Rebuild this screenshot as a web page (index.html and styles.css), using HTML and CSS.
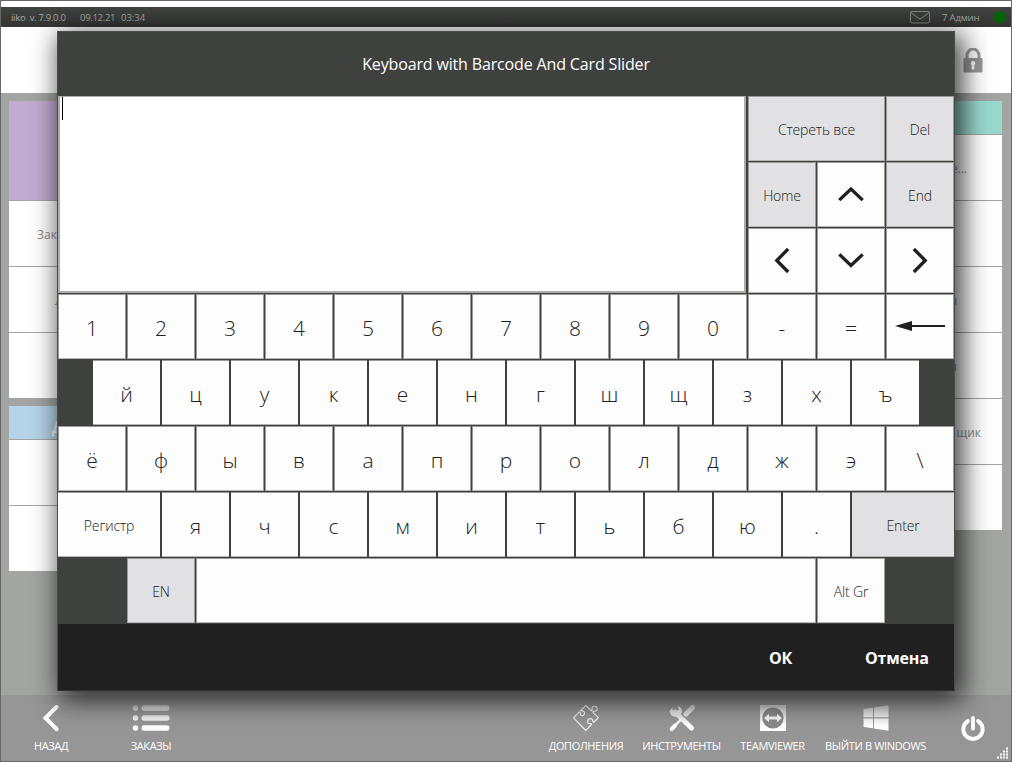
FILE: index.html
```html
<!DOCTYPE html>
<html lang="ru">
<head>
<meta charset="utf-8">
<title>iiko</title>
<link rel="stylesheet" href="styles.css">
</head>
<body>
<div class="window">
  <header class="status">
    <span class="app">iiko&nbsp; v. 7.9.0.0</span><span class="date">09.12.21</span><span>03:34</span>
    <svg class="mail" width="20" height="13" viewBox="0 0 20 13"><rect x=".5" y=".5" width="19" height="11.5" rx="1.5"/><path d="M1 1.5l7.2 5.6q1.8 1.3 3.6 0L19 1.5"/></svg>
    <span class="user">7 Админ</span><i class="online"></i>
  </header>
  <div class="head">
    <svg width="20" height="25" viewBox="0 0 20 25"><path d="M4 11V7.5a6 6.500 0 0 1 12 0V11" fill="none" stroke="#979897" stroke-width="3"/><rect x=".5" y="10" width="19" height="14.500" rx="1" fill="#979897"/><path d="M10 13a2.200 2.200 0 0 1 1.300 4v4.500H8.700V17A2.200 2.200 0 0 1 10 13z" fill="#fff"/></svg>
  </div>
  <main class="board">
    <div class="column left">
      <section class="group"><div class="cap purple"></div><div class="item zak">Зак</div><div class="item cut">Л</div><div class="item"></div></section>
      <section class="group"><div class="cap blue">Д</div><div class="item"></div><div class="item"></div></section>
    </div>
    <div class="column right">
      <section class="group"><div class="cap teal"></div><div class="item dots">е...</div><div class="item"></div><div class="item edge">н</div><div class="item edge">я</div><div class="item worker">щик</div><div class="item"></div></section>
    </div>
  </main>
  <footer class="toolbar">
    <div class="tool back"><svg width="40" height="28" viewBox="0 0 40 28"><path d="M25.500 3L14.500 14L25.500 25" fill="none" stroke="#fff" stroke-width="4" stroke-linecap="round"/></svg><span>НАЗАД</span></div>
    <div class="tool orders"><svg width="40" height="28" viewBox="0 0 40 28"><defs><linearGradient id="fade" gradientUnits="userSpaceOnUse" x1="0" y1="0" x2="0" y2="28"><stop offset="0" stop-color="#c8c8c8"/><stop offset=".75" stop-color="#fff"/></linearGradient></defs><g fill="url(#fade)"><circle cx="4.500" cy="4" r="2.700"/><circle cx="4.500" cy="14" r="2.700"/><circle cx="4.500" cy="24" r="2.700"/><rect x="10.500" y="1.300" width="28" height="5.400" rx="2.700"/><rect x="10.500" y="11.300" width="28" height="5.400" rx="2.700"/><rect x="10.500" y="21.300" width="28" height="5.400" rx="2.700"/></g></svg><span>ЗАКАЗЫ</span></div>
    <div class="tool addons"><svg width="40" height="28" viewBox="0 0 40 28"><path d="M7.500 13.800L13 8.200Q14.500 7.500 14.300 9.500Q14.500 12 17 11.500Q19.500 10 18 7.500Q16.500 6.800 14.800 6.400L19.800 1.600L25 6.500Q26.300 7.200 26 5Q26 2 28.800 2.300Q31.800 3 31 6Q30 7.500 27.500 7.300Q26.500 7.800 27.500 8.800L32.300 13.700L28 18Q26.800 18.500 26.800 16.800Q26.500 14.500 24 14.700Q21 15.500 22 18.800Q23 19.800 24.800 19.500Q26 19.900 25 21L19.700 26.300Z" fill="none" stroke="#f4f4f4" stroke-width="1.200"/></svg><span>ДОПОЛНЕНИЯ</span></div>
    <div class="tool tools"><svg width="40" height="28" viewBox="0 0 40 28"><g fill="none" stroke="url(#fade)" stroke-linecap="round"><path d="M13 8L29.500 24" stroke-width="5"/><path d="M10 24.500L18.500 16" stroke-width="2.500"/><path d="M9.700 25L13 21.700" stroke-width="4"/><path d="M24 10L30.500 3.500" stroke-width="5"/></g><path d="M12.300 1.500L10 5.200L13 8L16.800 5.500L15.500 1.800Q21.500 4 19.500 9.500L14 13Q8 12.500 7.500 7Z" fill="#e5e5e5"/></svg><span>ИНСТРУМЕНТЫ</span></div>
    <div class="tool team"><svg width="40" height="28" viewBox="0 0 40 28"><rect x="7" y="1" width="26" height="26" fill="url(#fade)"/><circle cx="20" cy="14" r="10.600" fill="#898989"/><path d="M11 14L16 9.700V12.400H24V9.700L29 14L24 18.300V15.600H16V18.300Z" fill="#f4f4f4"/></svg><span>TEAMVIEWER</span></div>
    <div class="tool win"><svg width="40" height="28" viewBox="0 0 40 28"><path d="M7.500 5L17 3.700V13.300H7.500ZM18 3.500L32.500 1.300V13.300H18ZM7.500 14.500H17V24.200L7.500 22.900ZM18 14.500H32.500V26.700L18 24.400Z" fill="url(#fade)"/></svg><span>ВЫЙТИ В WINDOWS</span></div>
    <svg class="power" width="26" height="26" viewBox="0 0 26 26"><path d="M8 5A9.700 9.700 0 1 0 18 5M13 2V12.500" fill="none" stroke="#fff" stroke-width="3.800" stroke-linecap="round"/></svg>
    <svg class="grip" width="13" height="13" viewBox="0 0 13 13"><path d="M10 1.500H12M7 4.500H12M4 7.500H12M1 10.500H12" stroke="#fff" stroke-width="2" stroke-dasharray="2 1"/></svg>
  </footer>
</div>

<div class="dialog">
  <div class="title">Keyboard with Barcode And Card Slider</div>
  <div class="upper">
    <div class="entry"><i class="caret"></i></div>
    <div class="nav">
      <div class="key word grey wide">Стереть все</div><div class="key word grey">Del</div>
      <div class="key word grey">Home</div>
      <div class="key"><svg class="arrow" width="28" height="28" viewBox="0 0 28 28"><path d="M3.500 18L14 8L24.500 18"/></svg></div>
      <div class="key word grey">End</div>
      <div class="key"><svg class="arrow" width="28" height="28" viewBox="0 0 28 28"><path d="M19 3.200L8.800 13.500L19 23.800"/></svg></div>
      <div class="key"><svg class="arrow" width="28" height="28" viewBox="0 0 28 28"><path d="M3.500 8.500L14 18.500L24.500 8.500"/></svg></div>
      <div class="key"><svg class="arrow" width="28" height="28" viewBox="0 0 28 28"><path d="M9 3.200L19.200 13.500L9 23.800"/></svg></div>
    </div>
  </div>
  <div class="row full"><div class="key">1</div><div class="key">2</div><div class="key">3</div><div class="key">4</div><div class="key">5</div><div class="key">6</div><div class="key">7</div><div class="key">8</div><div class="key">9</div><div class="key">0</div><div class="key">-</div><div class="key">=</div><div class="key"><svg class="erase" width="52" height="12" viewBox="0 0 52 12"><path d="M1 6L18 1V11Z" fill="#202020"/><path d="M16 6H51" stroke="#202020" stroke-width="2.200"/></svg></div></div>
  <div class="row half inset"><div class="key">й</div><div class="key">ц</div><div class="key">у</div><div class="key">к</div><div class="key">е</div><div class="key">н</div><div class="key">г</div><div class="key">ш</div><div class="key">щ</div><div class="key">з</div><div class="key">х</div><div class="key">ъ</div></div>
  <div class="row full"><div class="key">ё</div><div class="key">ф</div><div class="key">ы</div><div class="key">в</div><div class="key">а</div><div class="key">п</div><div class="key">р</div><div class="key">о</div><div class="key">л</div><div class="key">д</div><div class="key">ж</div><div class="key">э</div><div class="key">\</div></div>
  <div class="row half"><div class="key word shift">Регистр</div><div class="key">я</div><div class="key">ч</div><div class="key">с</div><div class="key">м</div><div class="key">и</div><div class="key">т</div><div class="key">ь</div><div class="key">б</div><div class="key">ю</div><div class="key">.</div><div class="key word grey enter">Enter</div></div>
  <div class="row full last"><div class="key word grey">EN</div><div class="key space"></div><div class="key word">Alt Gr</div></div>
  <div class="actions"><span class="ok">ОК</span><span class="cancel">Отмена</span></div>
</div>
</body>
</html>
```
FILE: styles.css
```css
* { box-sizing: border-box; }
body { margin: 0; width: 1012px; height: 762px; overflow: hidden; position: relative; font-family: "Open Sans", "Noto Sans", sans-serif; }
svg { display: block; flex: none; }

.window { display: flex; flex-direction: column; width: 1012px; height: 762px; padding-top: 6px; border: 1px solid #68686a; background: #fff; }
.status { display: flex; align-items: center; height: 20px; flex: none; padding: 0 6px 0 10px; background: linear-gradient(#414341, #343634); color: #a3a5a3; font-size: 9.5px; white-space: nowrap; }
.app { width: 69px; letter-spacing: -.3px; }
.date { width: 41px; letter-spacing: -.3px; }
.mail { margin-left: auto; fill: none; stroke: #858785; }
.user { width: 38px; margin: 0 14px 0 12px; letter-spacing: -.15px; }
.online { width: 12px; height: 12px; border-radius: 50%; background: #006400; margin-right: -1px; }
.head { display: flex; justify-content: flex-end; align-items: center; height: 66px; flex: none; padding-right: 28px; }
.board { display: flex; justify-content: space-between; height: 602px; flex: none; padding: 8px 9px 0 8px; background: #a3a5a3; }
.column { width: 222px; }
.group { display: flex; flex-direction: column; gap: 1px; margin-bottom: 8px; color: #8d8e8d; font-size: 12px; }
.cap { height: 99px; }
.purple { background: #c1abd1; }
.blue { height: 33px; background: #b5d4e8; color: #fff; font-size: 16px; font-weight: 600; line-height: 42px; padding-left: 43px; }
.teal { height: 33px; background: #99d9cd; }
.item { height: 65px; line-height: 67px; background: #fff; }
.zak { padding-left: 28px; }
.cut { padding-left: 46px; }
.right .item { text-align: right; }
.right .dots { padding-right: 35px; }
.right .edge { padding-right: 45px; }
.right .worker { padding-right: 21px; }

.toolbar { display: flex; flex: 1; position: relative; background: #969696; color: #fff; font-size: 11px; padding: 9px 0 0 0; }
.tool { display: flex; flex-direction: column; align-items: center; gap: 6px; white-space: nowrap; line-height: 15px; letter-spacing: -.35px; }
.back { width: 100px; }
.orders { width: 100px; }
.addons { width: 100px; margin-left: 335px; }
.tools { width: 91px; }
.team { width: 91px; }
.win { width: 115px; }
.power { margin: 12px 0 0 27px; }
.grip { position: absolute; right: 2px; bottom: 1px; }

.dialog { position: absolute; left: 57px; top: 31px; width: 898px; height: 660px; border: 1px solid #4b4d4b; border-bottom-color: #333; background: #3f413f; box-shadow: 5px 6px 25px 3px rgba(0, 0, 0, .75); color: #202020; }
.title { height: 64px; line-height: 65px; text-align: center; color: #fff; font-size: 16px; letter-spacing: -.15px; }
.upper { display: flex; height: 198px; }
.entry { width: 688px; height: 197px; margin: 0 2px 0 0; background: #fff; border: solid #aaacaa; border-width: 1px 2px 2px; padding: 0 2px; }
.caret { display: block; width: 1px; height: 23px; background: #000; }
.nav { display: grid; grid-template-columns: repeat(3, 68px); grid-auto-rows: 65px; gap: 1px; }
.key { display: flex; flex: none; align-items: center; justify-content: center; height: 65px; background: #fdfdfd; border: 1px solid #999b99; border-bottom-color: #b5b6b5; font-size: 21px; font-weight: 300; padding-top: 3px; }
.grey { background: #e1e1e3; }
.wide { grid-column: span 2; }
.nav .key { padding: 0; }
.key.word { font-size: 14px; padding-top: 1px; letter-spacing: -.15px; }
.arrow path { fill: none; stroke: #202020; stroke-width: 3.300; stroke-linecap: square; }
.row { display: flex; height: 66px; }
.full { gap: 1px; }
.full .key { width: 68px; }
.row .erase { margin: -4px 0 0 0; }
.half { gap: 2px; }
.half .key { width: 67px; border-left: 0; border-right: 0; }
.inset { padding-left: 35px; }
.row .shift { width: 102px; }
.row .enter { width: 102px; }
.last { padding-left: 69px; }
.row .space { width: 620px; }
.actions { display: flex; height: 66px; line-height: 69px; background: #202020; color: #fff; font-size: 16px; font-weight: 700; letter-spacing: -.2px; }
.ok { margin-left: 711px; width: 96px; }
```
